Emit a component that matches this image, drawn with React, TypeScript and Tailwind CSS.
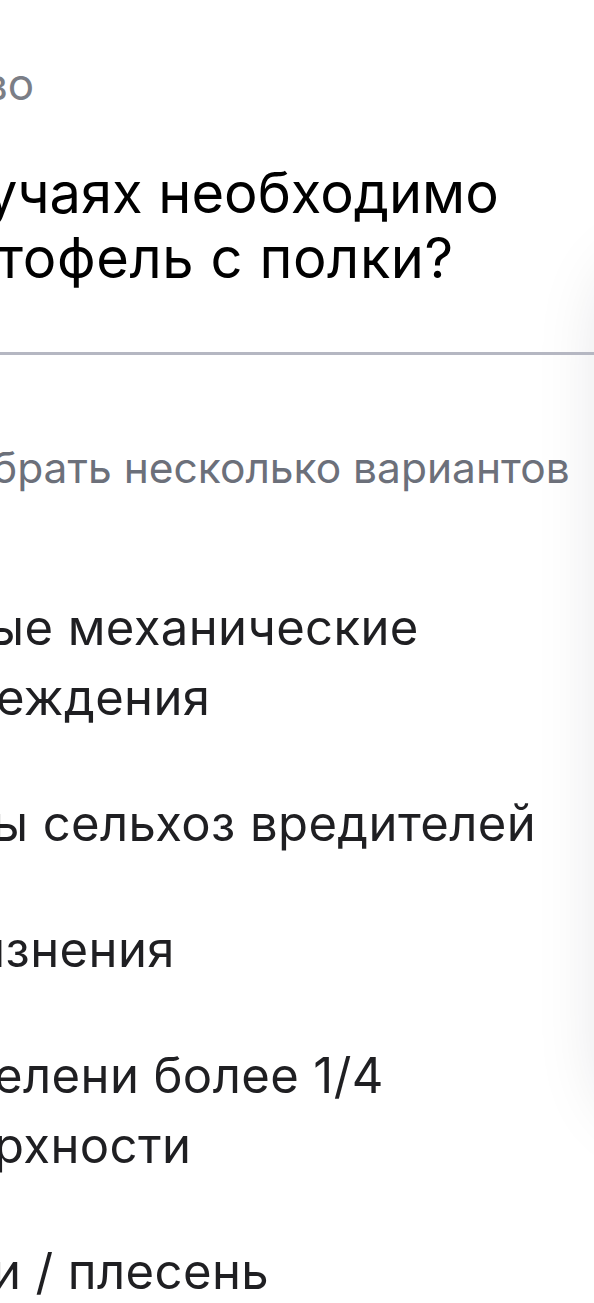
import React from "react";

const FONT = { fontFamily: "Inter, 'Noto Sans', sans-serif" };

function OptionLine({ text, shift }: { text: string; shift: string }) {
  return <div className={`whitespace-nowrap ${shift}`}>{text}</div>;
}

export default function App() {
  return (
    <div
      className="relative w-[594px] h-[1303px] overflow-hidden bg-white"
      style={FONT}
    >
      {/* neighbouring card peeking in from the right edge, only its shadow shows */}
      <div className="absolute left-[606px] top-[260px] h-[860px] w-[300px] rounded-[60px] bg-white shadow-[0_0_70px_rgba(20,24,40,0.13)]" />

      <div className="relative flex flex-col">
        {/* category label */}
        <div className="pt-[58px] h-[112px] text-[44px] leading-[52px] text-[#7b7e86] whitespace-nowrap -ml-[17px]">
          во
        </div>

        {/* question */}
        <div className="mt-[49px] text-[56px] leading-[65px] text-black">
          <div className="whitespace-nowrap -ml-[14px]">учаях необходимо</div>
          <div className="whitespace-nowrap -ml-[3px] tracking-[0.6px]">тофель с полки?</div>
        </div>

        <div className="mt-[61px] h-[3px] bg-[#b5b7c2]" />

        {/* hint */}
        <div className="mt-[85px] text-[42.5px] leading-[56px] text-[#6c707a] whitespace-nowrap -ml-[8px]">
          брать несколько вариантов
        </div>

        {/* answer options */}
        <div className="mt-[97px] flex flex-col gap-[56px] text-[49px] leading-[70px] tracking-[0.4px] text-[#1f1f22]">
          <div>
            <OptionLine text="ые механические" shift="-ml-[12px]" />
            <OptionLine text="еждения" shift="-ml-[4px]" />
          </div>
          <div>
            <OptionLine text="ы сельхоз вредителей" shift="-ml-[8px]" />
          </div>
          <div>
            <OptionLine text="язнения" shift="-ml-[22px]" />
          </div>
          <div>
            <OptionLine text="елени более 1/4" shift="-ml-[6px]" />
            <OptionLine text="рхности" shift="-ml-[6px]" />
          </div>
          <div>
            <OptionLine text="и / плесень" shift="-ml-[8px]" />
          </div>
        </div>
      </div>
    </div>
  );
}
